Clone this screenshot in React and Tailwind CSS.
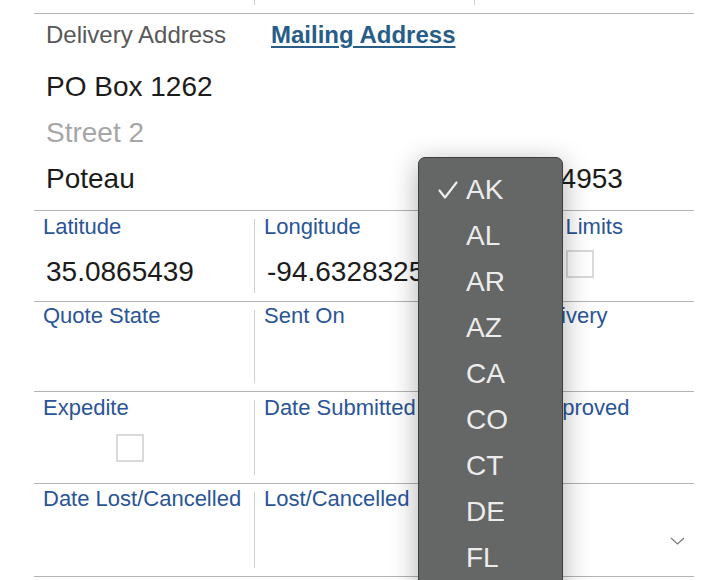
import React from 'react';

const states = ['AK', 'AL', 'AR', 'AZ', 'CA', 'CO', 'CT', 'DE', 'FL', 'GA'];

function Label({ children, lift = '-mt-[3px]' }) {
    return <div className={'text-[22px] leading-[22px] text-[#2a5597] whitespace-nowrap ' + lift}>{children}</div>;
}

function Value({ children }) {
    return <div className="text-[28px] leading-[28px] text-[#1c1c1c] mt-[20px] ml-[3px] whitespace-nowrap">{children}</div>;
}

function Checkbox({ className }) {
    return <div className={'w-[28px] h-[28px] border-2 border-[#d9d9d9] bg-white ' + className}></div>;
}

function Cell({ first, children }) {
    return (
        <div className={first ? 'px-[9px] min-w-0' : 'px-[9px] min-w-0 border-l border-[#d0d0d0]'}>
            {children}
        </div>
    );
}

function StateMenu() {
    return (
        <div className="absolute left-[418px] top-[157px] w-[145px] h-[440px] rounded-[7px] bg-[#656666] border border-[#3f3f3f] shadow-[0_6px_28px_rgba(0,0,0,0.32)] pt-[9px]">
            {states.map((s, i) => (
                <div key={s} className="flex items-center h-[46px] leading-[46px] text-[28px] text-[#ececec]">
                    <div className="w-[47px] flex items-center">
                        {i === 0 && (
                            <svg className="ml-[19px]" width="20" height="18" viewBox="0 0 20 18" fill="none">
                                <path d="M1.5 9.5 L7 16.5 L18.5 1.5" stroke="#ececec" strokeWidth="2.2" strokeLinecap="round" strokeLinejoin="round" />
                            </svg>
                        )}
                    </div>
                    <span>{s}</span>
                </div>
            ))}
        </div>
    );
}

export default function App() {
    return (
        <div className="relative w-[726px] h-[580px] overflow-hidden bg-white font-['Liberation_Sans',Arial,sans-serif]">
            <div className="ml-[34px] w-[660px]">
                {/* tail of the previous row */}
                <div className="grid grid-cols-3 h-[14px] pb-[8px] border-b border-[#b3b3b3]">
                    <Cell first />
                    <Cell />
                    <Cell />
                </div>

                {/* address */}
                <div className="h-[197px] border-b border-[#b3b3b3] pl-[12px]">
                    <div className="flex items-baseline h-[50px] pt-[9px] leading-[24px]">
                        <span className="w-[225px] text-[24px] text-[#585858]">Delivery Address</span>
                        <span className="text-[24px] font-bold text-[#275d87] underline decoration-2 underline-offset-[3px]">Mailing Address</span>
                    </div>
                    <div className="h-[46px] leading-[46px] text-[28px] text-[#1c1c1c]">PO Box 1262</div>
                    <div className="h-[46px] leading-[46px] text-[28px] text-[#a6a6a6]">Street 2</div>
                    <div className="flex h-[46px] leading-[46px] text-[28px] text-[#1c1c1c]">
                        <span className="w-[372px]">Poteau</span>
                        <span className="w-[127px]">AK</span>
                        <span>74953</span>
                    </div>
                </div>

                <div className="grid grid-cols-3 h-[91px] pt-[8px] pb-[8px] border-b border-[#b3b3b3]">
                    <Cell first>
                        <Label>Latitude</Label>
                        <Value>35.0865439</Value>
                    </Cell>
                    <Cell>
                        <Label>Longitude</Label>
                        <Value>-94.6328325</Value>
                    </Cell>
                    <Cell>
                        <Label>
                            Exceed <span className="ml-[2px]">Limits</span>
                        </Label>
                        <Checkbox className="mt-[12px] ml-[82px]" />
                    </Cell>
                </div>

                <div className="grid grid-cols-3 h-[90px] pt-[8px] pb-[8px] border-b border-[#b3b3b3]">
                    <Cell first>
                        <Label lift="-mt-[5px]">Quote State</Label>
                    </Cell>
                    <Cell>
                        <Label lift="-mt-[5px]">Sent On</Label>
                    </Cell>
                    <Cell>
                        <Label lift="-mt-[5px]">Est. Delivery</Label>
                    </Cell>
                </div>

                <div className="grid grid-cols-3 h-[92px] pt-[8px] pb-[8px] border-b border-[#b3b3b3]">
                    <Cell first>
                        <Label>Expedite</Label>
                        <Checkbox className="mt-[15px] ml-[73px]" />
                    </Cell>
                    <Cell>
                        <Label>Date Submitted</Label>
                    </Cell>
                    <Cell>
                        <Label>Date Approved</Label>
                    </Cell>
                </div>

                <div className="grid grid-cols-3 h-[93px] pt-[8px] pb-[8px] border-b border-[#b3b3b3]">
                    <Cell first>
                        <Label lift="-mt-[4px]">Date Lost/Cancelled</Label>
                    </Cell>
                    <Cell>
                        <Label lift="-mt-[4px]">Lost/Cancelled</Label>
                    </Cell>
                    <Cell>
                        <Label lift="-mt-[4px]">Reason</Label>
                        <div className="flex justify-end mt-[27px]">
                            <svg width="15" height="8" viewBox="0 0 15 8" fill="none">
                                <path d="M1 1 L7.5 7 L14 1" stroke="#7a7a7a" strokeWidth="1.2" />
                            </svg>
                        </div>
                    </Cell>
                </div>
            </div>

            <StateMenu />
        </div>
    );
}
